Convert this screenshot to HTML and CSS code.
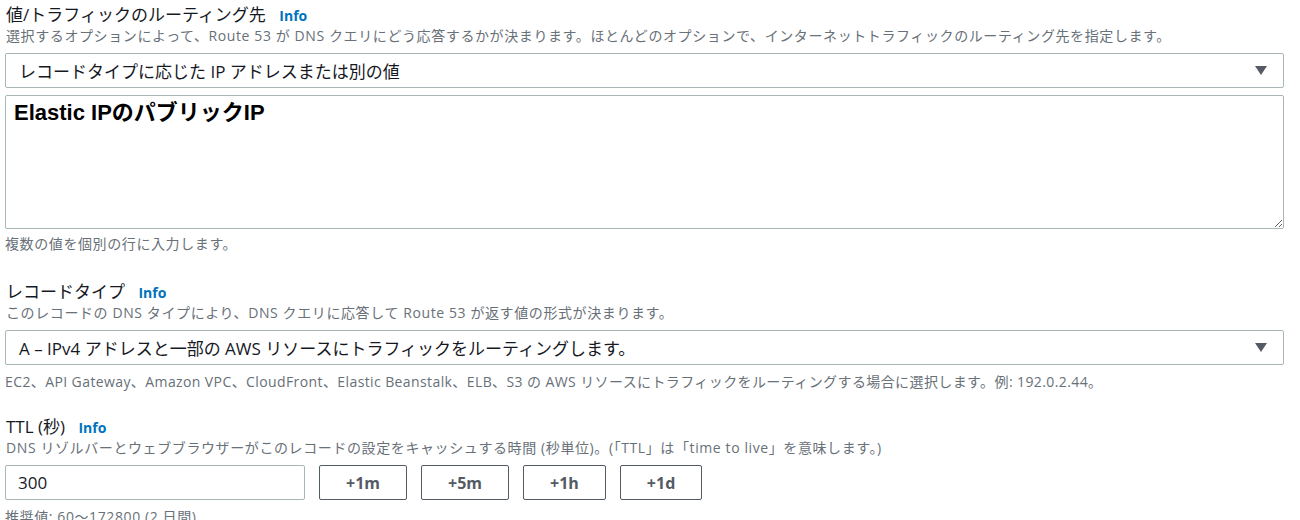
FILE: index.html
```html
<!DOCTYPE html>
<html lang="ja">
<head>
    <meta charset="UTF-8">
    <meta name="viewport" content="width=device-width, initial-scale=1.0">
    <title>レコードの作成</title>
    <link rel="stylesheet" href="styles.css">
</head>
<body>
    <div class="form">
        <div class="field field-value">
            <div class="label">値/トラフィックのルーティング先 <a class="info" href="#">Info</a></div>
            <div class="desc">選択するオプションによって、Route 53 が DNS クエリにどう応答するかが決まります。ほとんどのオプションで、インターネットトラフィックのルーティング先を指定します。</div>
            <div class="select">
                <span>レコードタイプに応じた IP アドレスまたは別の値</span>
                <svg class="caret" width="12" height="9" viewBox="0 0 12 9"><path d="M0 0h12L6 9z" fill="#545b64"/></svg>
            </div>
            <textarea class="values">Elastic IPのパブリックIP</textarea>
            <div class="hint hint-first">複数の値を個別の行に入力します。</div>
        </div>

        <div class="field field-type">
            <div class="label">レコードタイプ <a class="info" href="#">Info</a></div>
            <div class="desc">このレコードの DNS タイプにより、DNS クエリに応答して Route 53 が返す値の形式が決まります。</div>
            <div class="select">
                <span>A – IPv4 アドレスと一部の AWS リソースにトラフィックをルーティングします。</span>
                <svg class="caret" width="12" height="9" viewBox="0 0 12 9"><path d="M0 0h12L6 9z" fill="#545b64"/></svg>
            </div>
            <div class="hint hint-wide">EC2、API Gateway、Amazon VPC、CloudFront、Elastic Beanstalk、ELB、S3 の AWS リソースにトラフィックをルーティングする場合に選択します。例: 192.0.2.44。</div>
        </div>

        <div class="field field-ttl">
            <div class="label">TTL (秒) <a class="info" href="#">Info</a></div>
            <div class="desc">DNS リゾルバーとウェブブラウザーがこのレコードの設定をキャッシュする時間 (秒単位)。(「TTL」は「time to live」を意味します。)</div>
            <div class="ttl-row">
                <input class="ttl-input" type="text" value="300">
                <button class="btn">+1m</button>
                <button class="btn">+5m</button>
                <button class="btn">+1h</button>
                <button class="btn">+1d</button>
            </div>
            <div class="hint">推奨値: 60〜172800 (2 日間)</div>
        </div>
    </div>
</body>
</html>
```

FILE: styles.css
```css
body {
    margin: 0;
    background: #fff;
    color: #16191f;
    font-family: "Open Sans", "Noto Sans CJK JP", sans-serif;
}
.form {
    width: 1279px;
    margin-left: 5px;
    padding-top: 4px;
}
.field-type {
    margin-top: 27px;
}
.field-ttl {
    margin-top: 24px;
}
.label {
    height: 22px;
    font-size: 17px;
    line-height: 22px;
    padding-left: 1px;
}
.info {
    margin-left: 9px;
    font-size: 14px;
    font-weight: 700;
    color: #0073bb;
    text-decoration: none;
}
.desc, .hint {
    height: 20px;
    font-size: 14px;
    line-height: 20px;
    letter-spacing: 0.6px;
    color: #687078;
    white-space: nowrap;
}
.desc {
    padding-left: 1px;
}
.select {
    display: flex;
    align-items: center;
    justify-content: space-between;
    box-sizing: border-box;
    height: 35px;
    margin-top: 7px;
    padding: 0 16px 0 13px;
    border: 1px solid #aab7b8;
    border-radius: 2px;
    font-size: 17px;
}
.values {
    display: block;
    box-sizing: border-box;
    width: 100%;
    height: 134px;
    margin: 7px 0 0;
    padding: 4px 8px;
    border: 1px solid #aab7b8;
    border-radius: 2px;
    font-family: "Liberation Sans", "Noto Sans CJK JP", sans-serif;
    font-size: 22px;
    font-weight: 700;
    line-height: 26px;
    color: #000;
    resize: vertical;
}
.hint {
    margin-top: 7px;
}
.hint-first {
    margin-top: 5px;
}
.hint-wide {
    letter-spacing: 0.4px;
}
.ttl-row {
    display: flex;
    gap: 14px;
    margin-top: 7px;
}
.ttl-input {
    box-sizing: border-box;
    width: 300px;
    height: 35px;
    padding: 0 12px;
    border: 1px solid #aab7b8;
    border-radius: 2px;
    font-family: inherit;
    font-size: 17px;
    color: #16191f;
}
.btn {
    box-sizing: border-box;
    height: 35px;
    padding: 0 26px;
    border: 1px solid #545b64;
    border-radius: 2px;
    background: #fff;
    color: #545b64;
    font-family: inherit;
    font-size: 16px;
    font-weight: 700;
}
```
